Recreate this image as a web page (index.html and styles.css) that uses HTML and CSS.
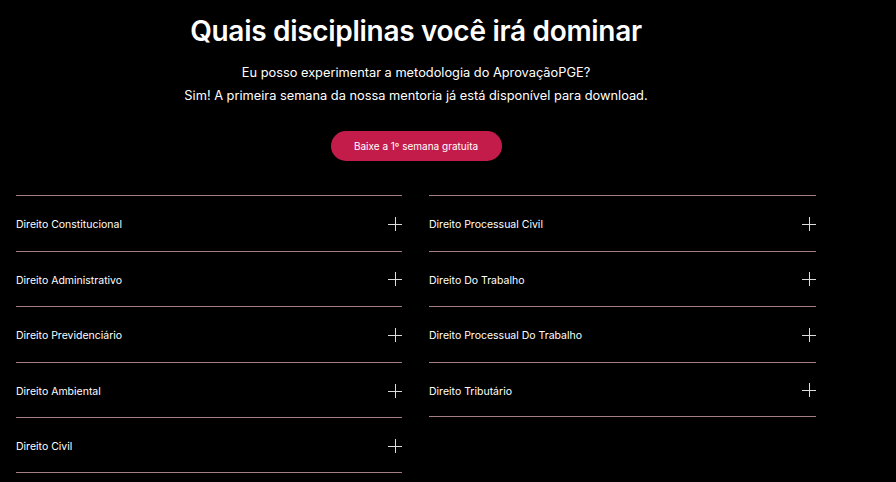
FILE: index.html
```html
<!DOCTYPE html>
<html lang="pt-BR">
<head>
  <meta charset="UTF-8">
  <title>Disciplinas</title>
  <link rel="stylesheet" href="styles.css">
</head>
<body>

  <div class="container">
    <h2>Quais disciplinas você irá dominar</h2>
    <p class="sub">Eu posso experimentar a metodologia do AprovaçãoPGE?</p>
    <p class="sub">Sim! A primeira semana da nossa mentoria já está disponível para download.</p>

    <button class="cta">Baixe a 1º semana gratuita</button>

    <div class="grid">
      <div class="col">
        <div class="item"><span>Direito Constitucional</span><i class="plus"></i></div>
        <div class="item"><span>Direito Administrativo</span><i class="plus"></i></div>
        <div class="item"><span>Direito Previdenciário</span><i class="plus"></i></div>
        <div class="item"><span>Direito Ambiental</span><i class="plus"></i></div>
        <div class="item"><span>Direito Civil</span><i class="plus"></i></div>
      </div>
      <div class="col">
        <div class="item"><span>Direito Processual Civil</span><i class="plus"></i></div>
        <div class="item"><span>Direito Do Trabalho</span><i class="plus"></i></div>
        <div class="item"><span>Direito Processual Do Trabalho</span><i class="plus"></i></div>
        <div class="item"><span>Direito Tributário</span><i class="plus"></i></div>
      </div>
    </div>
  </div>

</body>
</html>
```

FILE: styles.css
```css
body {
  margin: 0;
  background: #000;
  color: #fff;
  font-family: Inter, "Open Sans", sans-serif;
}
.container {
  width: 800px;
  margin-left: 16px;
  padding-top: 13px;
  text-align: center;
}
h2 {
  margin: 0 0 16px;
  font-size: 28px;
  font-weight: 600;
  line-height: 36px;
  letter-spacing: -0.3px;
}
.sub {
  margin: 0 0 7px;
  font-size: 12.8px;
  line-height: 16px;
}
.cta {
  margin-top: 20px;
  width: 171px;
  height: 30px;
  border: none;
  border-radius: 15px;
  background: #c41c4a;
  color: #fff;
  font-family: Inter, sans-serif;
  font-size: 10px;
  cursor: pointer;
}
.grid {
  display: grid;
  grid-template-columns: 386px 387px;
  column-gap: 27px;
  margin-top: 34px;
  text-align: left;
}
.item {
  display: flex;
  align-items: center;
  justify-content: space-between;
  box-sizing: border-box;
  height: 55.6px;
  padding-top: 3px;
  border-top: 1px solid #a57f86;
  font-size: 10.5px;
}
.col .item:last-child {
  border-bottom: 1px solid #a57f86;
}
.plus {
  position: relative;
  width: 14px;
  height: 14px;
  margin-top: -2px;
}
.plus::before,
.plus::after {
  content: "";
  position: absolute;
  background: #ddd;
}
.plus::before {
  left: 0;
  top: 7px;
  width: 14px;
  height: 1px;
}
.plus::after {
  left: 7px;
  top: 0;
  width: 1px;
  height: 14px;
}
```
